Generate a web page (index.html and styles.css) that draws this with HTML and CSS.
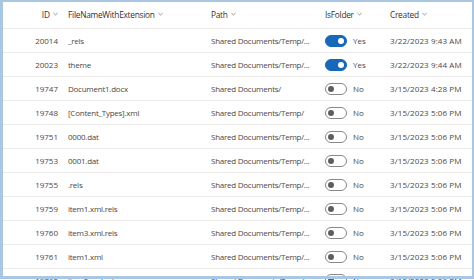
FILE: index.html
```html
<!DOCTYPE html>
<html lang="en">
<head>
  <meta charset="UTF-8" />
  <title>Files list</title>
  <link rel="stylesheet" href="styles.css">
</head>
<body>
  <div class="frame">
    <div class="list">
      <div class="row head">
        <div class="cell id">ID <svg class="chev" viewBox="0 0 6 4"><path d="M0.5 0.8 L3 3.2 L5.5 0.8"/></svg></div>
        <div class="cell txt">FileNameWithExtension <svg class="chev" viewBox="0 0 6 4"><path d="M0.5 0.8 L3 3.2 L5.5 0.8"/></svg></div>
        <div class="cell txt">Path <svg class="chev" viewBox="0 0 6 4"><path d="M0.5 0.8 L3 3.2 L5.5 0.8"/></svg></div>
        <div class="cell txt">IsFolder <svg class="chev" viewBox="0 0 6 4"><path d="M0.5 0.8 L3 3.2 L5.5 0.8"/></svg></div>
        <div class="cell txt">Created <svg class="chev" viewBox="0 0 6 4"><path d="M0.5 0.8 L3 3.2 L5.5 0.8"/></svg></div>
      </div>

      <div class="row">
        <div class="cell id">20014</div>
        <div class="cell txt">_rels</div>
        <div class="cell txt">Shared Documents/Temp/...</div>
        <div class="cell"><span class="toggle on"></span>Yes</div>
        <div class="cell date">3/22/2023 9:43 AM</div>
      </div>
      <div class="row">
        <div class="cell id">20023</div>
        <div class="cell txt">theme</div>
        <div class="cell txt">Shared Documents/Temp/...</div>
        <div class="cell"><span class="toggle on"></span>Yes</div>
        <div class="cell date">3/22/2023 9:44 AM</div>
      </div>
      <div class="row">
        <div class="cell id">19747</div>
        <div class="cell txt">Document1.docx</div>
        <div class="cell txt">Shared Documents/</div>
        <div class="cell"><span class="toggle"></span>No</div>
        <div class="cell date">3/15/2023 4:28 PM</div>
      </div>
      <div class="row">
        <div class="cell id">19748</div>
        <div class="cell txt">[Content_Types].xml</div>
        <div class="cell txt">Shared Documents/Temp/</div>
        <div class="cell"><span class="toggle"></span>No</div>
        <div class="cell date">3/15/2023 5:06 PM</div>
      </div>
      <div class="row">
        <div class="cell id">19751</div>
        <div class="cell txt">0000.dat</div>
        <div class="cell txt">Shared Documents/Temp/...</div>
        <div class="cell"><span class="toggle"></span>No</div>
        <div class="cell date">3/15/2023 5:06 PM</div>
      </div>
      <div class="row">
        <div class="cell id">19753</div>
        <div class="cell txt">0001.dat</div>
        <div class="cell txt">Shared Documents/Temp/...</div>
        <div class="cell"><span class="toggle"></span>No</div>
        <div class="cell date">3/15/2023 5:06 PM</div>
      </div>
      <div class="row">
        <div class="cell id">19755</div>
        <div class="cell txt">.rels</div>
        <div class="cell txt">Shared Documents/Temp/...</div>
        <div class="cell"><span class="toggle"></span>No</div>
        <div class="cell date">3/15/2023 5:06 PM</div>
      </div>
      <div class="row">
        <div class="cell id">19759</div>
        <div class="cell txt">item1.xml.rels</div>
        <div class="cell txt">Shared Documents/Temp/...</div>
        <div class="cell"><span class="toggle"></span>No</div>
        <div class="cell date">3/15/2023 5:06 PM</div>
      </div>
      <div class="row">
        <div class="cell id">19760</div>
        <div class="cell txt">item3.xml.rels</div>
        <div class="cell txt">Shared Documents/Temp/...</div>
        <div class="cell"><span class="toggle"></span>No</div>
        <div class="cell date">3/15/2023 5:06 PM</div>
      </div>
      <div class="row">
        <div class="cell id">19761</div>
        <div class="cell txt">item1.xml</div>
        <div class="cell txt">Shared Documents/Temp/...</div>
        <div class="cell"><span class="toggle"></span>No</div>
        <div class="cell date">3/15/2023 5:06 PM</div>
      </div>
      <div class="row last">
        <div class="cell id">19762</div>
        <div class="cell txt">item2.xml.rels</div>
        <div class="cell txt">Shared Documents/Temp/...</div>
        <div class="cell"><span class="toggle"></span>No</div>
        <div class="cell date">3/15/2023 5:06 PM</div>
      </div>
    </div>
  </div>
</body>
</html>
```

FILE: styles.css
```css
body {
  margin: 0;
  background-color: #ffffff;
  font-family: 'Open Sans', 'Noto Sans', sans-serif;
}

.frame {
  position: relative;
  width: 474px;
  height: 280px;
  overflow: hidden;
  background: white;
}

/* blue screenshot frame drawn over the list */
.frame::after {
  content: '';
  position: absolute;
  top: 0;
  left: 0;
  width: 469px;
  height: 274px;
  border: 2px solid #a9c6e2;
  border-left-width: 3px;
  border-bottom-width: 3px;
  pointer-events: none;
}

.list {
  padding-left: 3px;
}

.row {
  display: grid;
  grid-template-columns: 57px 143px 114px 65px 1fr;
  height: 24px;
  align-items: center;
  border-bottom: 1px solid #edebe9;
  box-sizing: border-box;
  font-size: 8px;
  color: #4a4846;
}

.row.head {
  height: 29px;
  color: #323130;
  font-size: 8.3px;
}

/* half-hidden row under the frame's lower edge */
.row.last {
  height: 18px;
  align-items: end;
}

.cell {
  display: flex;
  align-items: center;
  padding-left: 8px;
  white-space: nowrap;
  overflow: hidden;
}

.cell.txt {
  letter-spacing: -0.25px;
}

.cell.date {
  letter-spacing: 0.1px;
}

.cell.id {
  justify-content: flex-end;
  padding-left: 0;
  padding-right: 2px;
}

.chev {
  width: 5px;
  height: 4px;
  margin-left: 3px;
  fill: none;
  stroke: #605e5c;
  stroke-width: 0.8;
}

.toggle {
  position: relative;
  width: 22px;
  height: 12px;
  border: 1px solid #8a8886;
  border-radius: 6px;
  box-sizing: border-box;
  margin-right: 6px;
  background: white;
}

.toggle::after {
  content: '';
  position: absolute;
  top: 2px;
  left: 2px;
  width: 6px;
  height: 6px;
  border-radius: 50%;
  background: #605e5c;
}

.toggle.on {
  background: #1768b8;
  border-color: #1768b8;
}

.toggle.on::after {
  left: auto;
  right: 2px;
  background: white;
}
```
